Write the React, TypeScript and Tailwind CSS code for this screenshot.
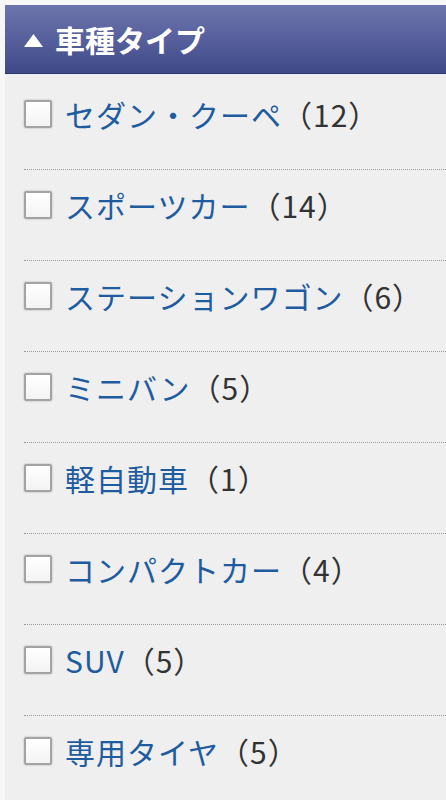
import React from 'react';

interface CarType {
  label: string;
  count: number;
}

const carTypes: CarType[] = [
  { label: 'セダン・クーペ', count: 12 },
  { label: 'スポーツカー', count: 14 },
  { label: 'ステーションワゴン', count: 6 },
  { label: 'ミニバン', count: 5 },
  { label: '軽自動車', count: 1 },
  { label: 'コンパクトカー', count: 4 },
  { label: 'SUV', count: 5 },
  { label: '専用タイヤ', count: 5 },
];

const FilterRow: React.FC<CarType> = ({ label, count }) => (
  <li className="pt-[15px] pb-[35px] border-b border-dotted border-[#9a9a9a] last:border-b-0">
    <label className="flex items-center h-[40px] cursor-pointer">
      <span className="w-[28px] h-[28px] shrink-0 rounded-[2px] border-2 border-[#a3a3a3] bg-gradient-to-b from-[#ffffff] to-[#f3f3f3] shadow-[0_0_2px_rgba(0,0,0,0.3)]" />
      <span className="ml-[13px] text-[30px] leading-[40px] tracking-[1px] whitespace-nowrap">
        <a href="#" className="text-[#1f5c9f] no-underline">{label}</a>
        <span className="text-[#333333]">（{count}）</span>
      </span>
    </label>
  </li>
);

export default function App() {
  return (
    <div
      className="min-h-[800px] bg-[#f7f7f7] pt-[5px] pl-[5px] overflow-hidden"
      style={{ fontFamily: '"Noto Sans CJK JP", "Noto Sans", sans-serif' }}
    >
      <div className="h-[69px] flex items-center pl-[19px] gap-[12px] bg-gradient-to-b from-[#6d75ac] via-[#57609c] to-[#3f4988] border-b border-[#2c336a]">
        <svg width="19" height="13" viewBox="0 0 19 13" className="mt-[2px]">
          <polygon points="9.5,0 19,13 0,13" fill="#ffffff" />
        </svg>
        <h2 className="text-white font-bold text-[30px] leading-none">車種タイプ</h2>
      </div>
      <ul className="bg-[#efefef] pl-[19px] pt-[5px] min-h-[726px]">
        {carTypes.map((t) => (
          <FilterRow key={t.label} {...t} />
        ))}
      </ul>
    </div>
  );
}
